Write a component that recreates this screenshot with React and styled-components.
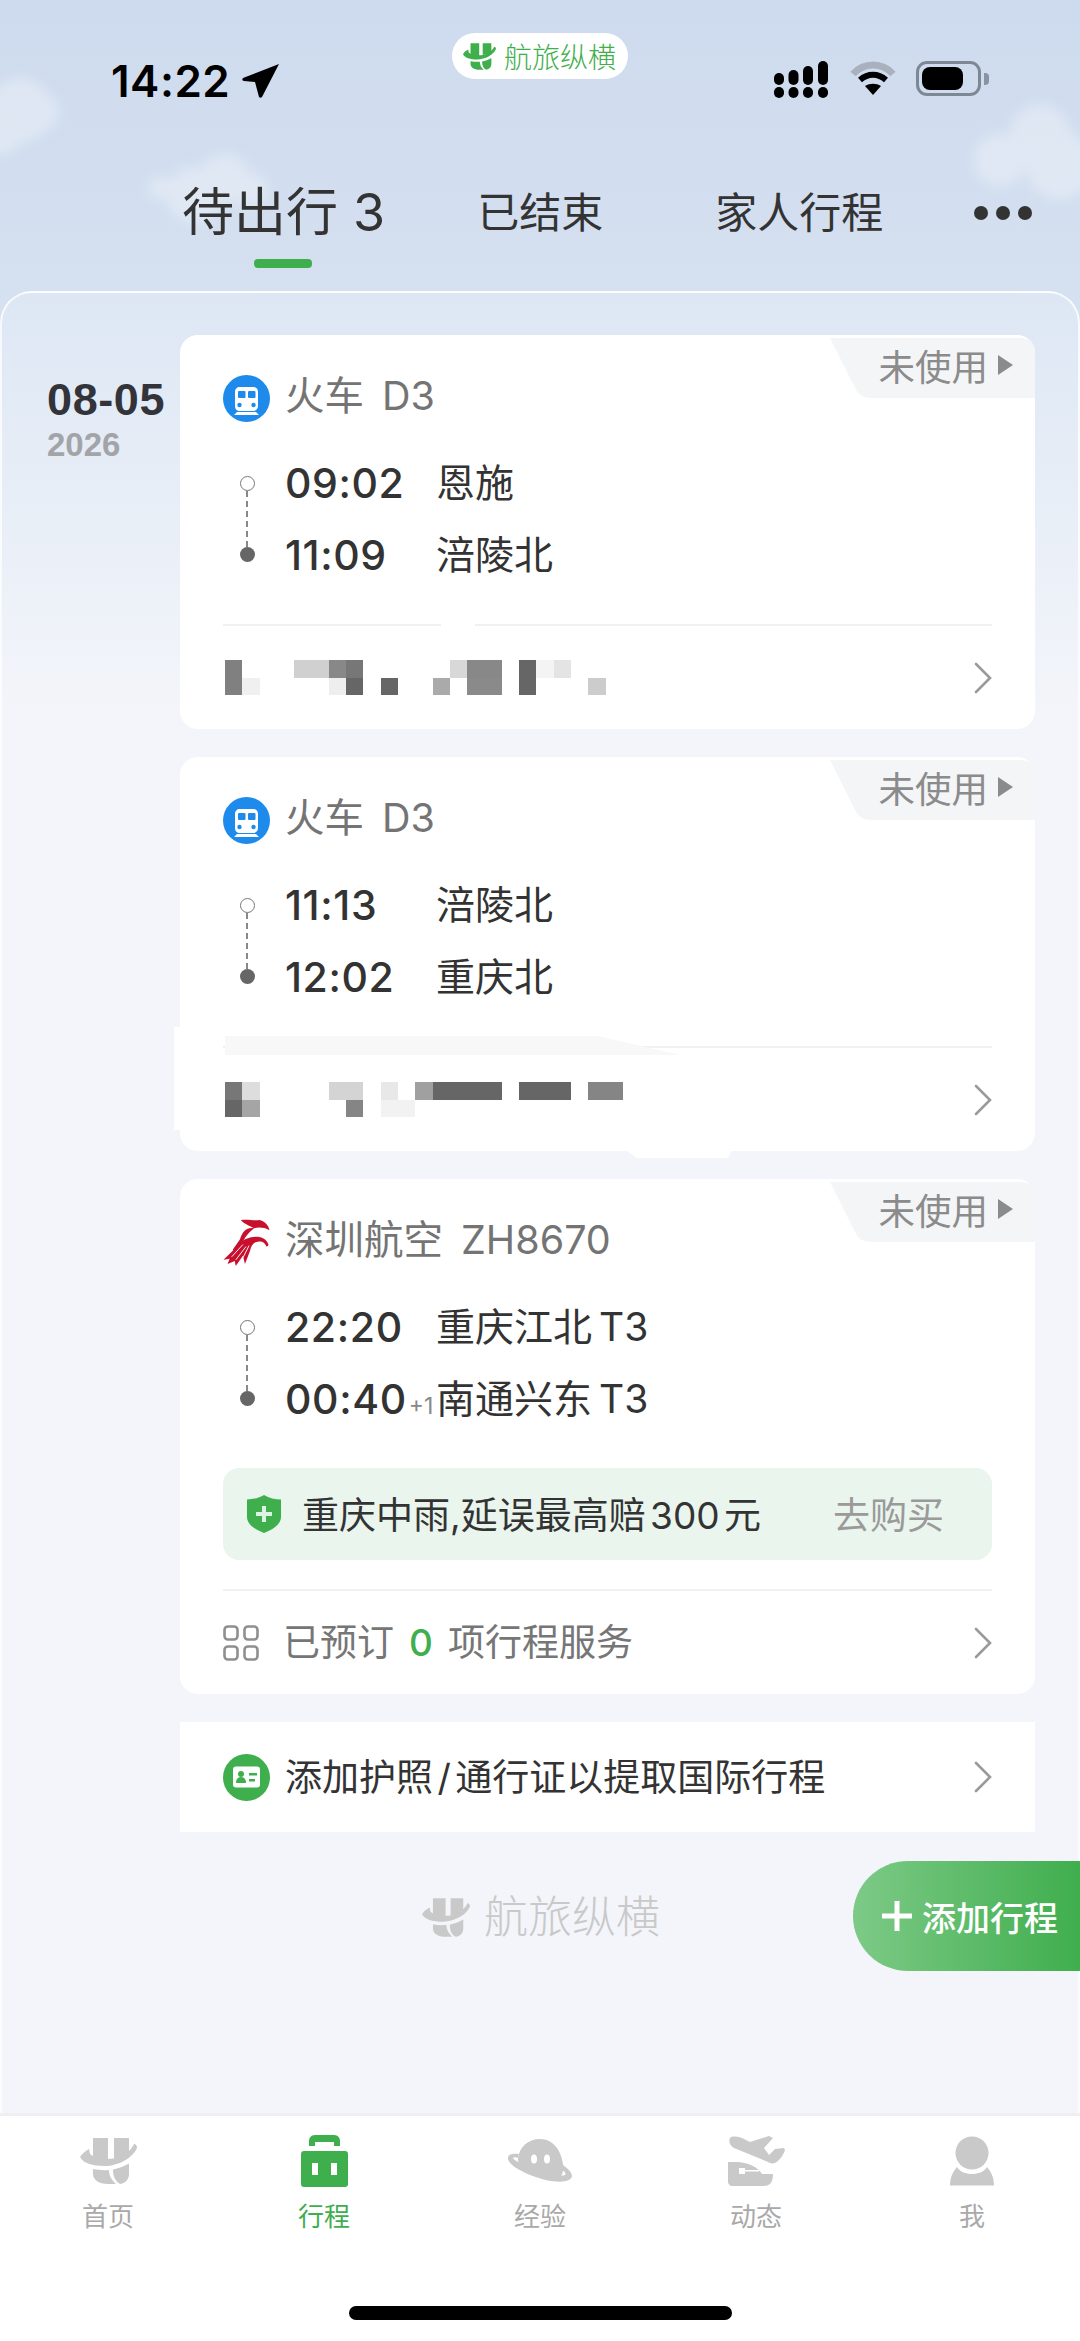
import React from 'react';
import styled, { createGlobalStyle } from 'styled-components';

const GREEN = '#3fae4d';
const SANS = 'Inter, "Noto Sans CJK SC", sans-serif';

const GlobalStyle = createGlobalStyle`
    html, body {
        margin: 0;
        padding: 0;
        background: #f3f5fa;
    }
    * {
        box-sizing: border-box;
    }
`;

const Page = styled.div`
    position: relative;
    width: 1080px;
    height: 2341px;
    overflow: hidden;
    display: flex;
    flex-direction: column;
    font-family: ${SANS};
    background: linear-gradient(#cedbee, #d5e0f0 300px);
`;

const Clouds = styled.svg`
    position: absolute;
    left: 0;
    top: 0;
`;

const Header = styled.header`
    position: relative;
    height: 291px;
    flex: none;
`;

const StatusBar = styled.div`
    display: grid;
    grid-template-columns: 1fr auto 1fr;
    padding: 33px 90px 0;
`;

const Clock = styled.div`
    display: flex;
    align-items: center;
    gap: 12px;
    margin: 23px 0 0 21px;
    font-size: 44px;
    font-weight: 600;
    line-height: 50px;
    letter-spacing: 0.5px;
    color: #000;
`;

const Pill = styled.div`
    display: flex;
    align-items: center;
    gap: 8px;
    height: 46px;
    width: 176px;
    padding-left: 11px;
    border-radius: 23px;
    background: #fff;
    font-size: 28px;
    font-weight: 300;
    color: ${GREEN};
`;

const StatusIcons = styled.div`
    display: flex;
    justify-content: flex-end;
    align-items: flex-start;
    gap: 20px;
    margin: 28px 9px 0 0;
`;

const Battery = styled.div`
    position: relative;
    width: 65px;
    height: 35px;
    padding: 3px;
    border: 3px solid #7e8794;
    border-radius: 11px;
    &::before {
        content: '';
        display: block;
        width: 41px;
        height: 100%;
        border-radius: 8px;
        background: #000;
    }
    &::after {
        content: '';
        position: absolute;
        right: -11px;
        top: 9px;
        width: 5px;
        height: 12px;
        border-radius: 0 4px 4px 0;
        background: #8a93a1;
    }
`;

const Tabs = styled.nav`
    display: flex;
    align-items: center;
    height: 70px;
    margin-top: 72px;
    padding-left: 182px;
    color: #333;
`;

const Tab = styled.div`
    position: relative;
    margin-right: ${(p) => p.$gap}px;
    font-size: ${(p) => (p.$active ? 52 : 42)}px;
    font-weight: 400;
    line-height: 70px;
    white-space: nowrap;
    ${(p) =>
        p.$active &&
        `&::after {
            content: '';
            position: absolute;
            left: 72px;
            bottom: -20px;
            width: 58px;
            height: 9px;
            border-radius: 4px;
            background: ${GREEN};
        }`}
`;

const TabCount = styled.span`
    margin-left: 15px;
`;

const More = styled.div`
    display: flex;
    gap: 8px;
`;

const Dot = styled.span`
    width: 14px;
    height: 14px;
    border-radius: 50%;
    background: #333;
`;

const Panel = styled.main`
    position: relative;
    flex: 1;
    padding-top: 42px;
    border: 2px solid rgba(255, 255, 255, 0.75);
    border-bottom: 0;
    border-radius: 32px 32px 0 0;
    background: linear-gradient(#dde7f4, #f3f5fa 420px);
`;

const TripRow = styled.div`
    display: flex;
    padding: 0 43px 0 45px;
`;

const DateCol = styled.div`
    width: 133px;
    flex: none;
    padding-top: 40px;
    font-family: "Liberation Sans", sans-serif;
    font-weight: 700;
`;

const DateDay = styled.div`
    font-size: 45px;
    line-height: 50px;
    letter-spacing: 0.6px;
    color: #33343a;
`;

const DateYear = styled.div`
    font-size: 33px;
    line-height: 40px;
    color: #a2a4a8;
`;

const CardStack = styled.div`
    flex: 1;
    display: flex;
    flex-direction: column;
    gap: 28px;
`;

const Card = styled.section`
    position: relative;
    padding: 40px 43px 0;
    border-radius: 18px;
    background: #fff;
`;

const Smudge = styled.div`
    position: absolute;
    background: #fff;
`;

const LeftSmudge = styled(Smudge)`
    left: -6px;
    top: 270px;
    width: 8px;
    height: 103px;
`;

const BottomSmudge = styled(Smudge)`
    left: 446px;
    bottom: -7px;
    width: 106px;
    height: 8px;
    clip-path: polygon(0 0, 100% 0, 96% 100%, 10% 100%);
`;

const StatusTag = styled.div`
    position: absolute;
    top: 3px;
    right: 0;
    width: 205px;
    height: 60px;
    display: flex;
    align-items: center;
    justify-content: flex-end;
    gap: 10px;
    padding: 0 22px 6px 0;
    background: #f3f5f7;
    clip-path: path('M0 0 H190 Q205 0 205 15 V60 H42 Q29 60 25 50 Z');
    font-size: 36.500px;
    color: #8b8b8b;
`;

const TagArrow = styled.span`
    width: 0;
    height: 0;
    border-left: 15px solid #8b8b8b;
    border-top: 10px solid transparent;
    border-bottom: 10px solid transparent;
`;

const TitleRow = styled.div`
    display: flex;
    align-items: center;
    height: 47px;
    gap: 15px;
    font-size: 39.500px;
    line-height: 47px;
    color: #747474;
`;

const Carrier = styled.div`
    display: flex;
    align-items: baseline;
    gap: 18px;
    margin-top: -5px;
`;

const Route = styled.div`
    display: flex;
    margin-top: 25px;
`;

const Timeline = styled.div`
    width: 48px;
    margin-right: 15px;
    padding-top: 29px;
    display: flex;
    flex-direction: column;
    align-items: center;
`;

const StopOpen = styled.span`
    width: 15px;
    height: 15px;
    border: 1.5px solid #777;
    border-radius: 50%;
`;

const Dash = styled.span`
    height: 56px;
    border-left: 2px dashed #888;
`;

const StopFilled = styled.span`
    width: 15px;
    height: 15px;
    border-radius: 50%;
    background: #666;
`;

const TimeRow = styled.div`
    display: flex;
    align-items: center;
    height: 72px;
    color: #333;
`;

const Time = styled.div`
    width: 150px;
    margin-left: -1px;
    margin-right: 1px;
    font-size: 41px;
    font-weight: 500;
    letter-spacing: 0.6px;
    white-space: nowrap;
`;

const NextDay = styled.span`
    margin-left: 2px;
    font-size: 23px;
    font-weight: 400;
    letter-spacing: 0;
    color: #888;
`;

const City = styled.div`
    padding-bottom: 6px;
    font-size: 39px;
    word-spacing: -4px;
`;

const Insurance = styled.div`
    display: flex;
    align-items: center;
    height: 92px;
    margin-top: 33px;
    padding: 0 48px 0 24px;
    border-radius: 16px;
    background: #eaf5ee;
    font-size: 37px;
    color: #333;
`;

const InsuranceText = styled.span`
    flex: 1;
    margin-left: 21px;
    padding-bottom: 3px;
    white-space: nowrap;
    word-spacing: -6px;
`;

const Buy = styled.span`
    padding-bottom: 3px;
    font-size: 37px;
    color: #9a9a9a;
`;

const Divider = styled.div`
    position: relative;
    height: 2px;
    margin-top: ${(p) => p.$top}px;
    background: #f1f1f1;
`;

const DividerGap = styled.span`
    position: absolute;
    left: 218px;
    top: 0;
    width: 34px;
    height: 2px;
    background: #fff;
`;

const DividerBand = styled.span`
    position: absolute;
    left: 2px;
    top: -10px;
    width: 455px;
    height: 19px;
    background: #f8f8f8;
    clip-path: polygon(0 0, 82% 0, 100% 100%, 0 100%);
`;

const FootRow = styled.div`
    display: flex;
    align-items: center;
    justify-content: space-between;
    height: ${(p) => p.$height || 103}px;
    font-size: 37px;
    color: ${(p) => p.$color || '#767676'};
`;

const FootLabel = styled.div`
    display: flex;
    align-items: center;
    gap: ${(p) => p.$gap || 0}px;
`;

const FootText = styled.span`
    padding-bottom: 5px;
    word-spacing: ${(p) => p.$spacing || 0}px;
`;

const Count = styled.span`
    margin: 0 15px;
    font-weight: 500;
    color: ${GREEN};
`;

const Mosaic = styled.div`
    display: grid;
    grid-template-columns: repeat(23, 17.3px);
    grid-auto-rows: 17.5px;
    margin-left: 2px;
`;

const Cell = styled.span`
    background: ${(p) => p.$shade || 'transparent'};
`;

const PassportCard = styled(Card)`
    padding-top: 0;
    border-radius: 0;
`;

const FooterLogo = styled.div`
    display: flex;
    justify-content: center;
    align-items: center;
    gap: 14px;
    margin-top: 55px;
    margin-left: 2px;
    font-size: 44px;
    font-weight: 300;
    line-height: 60px;
    color: #c9c9c9;
`;

const AddButton = styled.div`
    position: absolute;
    right: -2px;
    bottom: 142px;
    width: 227px;
    height: 110px;
    display: flex;
    align-items: center;
    gap: 10px;
    padding-left: 29px;
    border-radius: 55px 0 0 55px;
    background: linear-gradient(90deg, #7dca87, #3fae4d);
    font-size: 34px;
    font-weight: 500;
    color: #fff;
    white-space: nowrap;
`;

const BottomNav = styled.footer`
    flex: none;
    height: 228px;
    display: flex;
    flex-direction: column;
    border-top: 3px solid #eeeff1;
    background: #fff;
`;

const NavGrid = styled.div`
    display: grid;
    grid-template-columns: repeat(5, 1fr);
    padding-top: 17px;
`;

const NavItem = styled.div`
    display: flex;
    flex-direction: column;
    align-items: center;
    font-size: 26px;
    color: ${(p) => (p.$active ? GREEN : '#a9a9a9')};
`;

const NavIconBox = styled.div`
    height: 56px;
    display: flex;
    align-items: center;
`;

const NavLabel = styled.div`
    margin-top: 8px;
    line-height: 40px;
`;

const HomeBar = styled.div`
    width: 383px;
    height: 14px;
    margin: 69px auto 0;
    border-radius: 7px;
    background: #000;
`;

const LogoMark = ({ width, height, color }) => (
    <svg width={width} height={height} viewBox="0 0 57 46" fill={color}>
        <path d="M13 0h15v22H13zM34 0h15v20H34z" />
        <path d="M0 19C2 16 5 13 9 11l1 5c3 3 9 5 17 5 12 0 23-6 27-15 2 0 3 2 3 4C53 20 38 28 25 28 12 28 3 25 0 19z" />
        <path d="M13 31c5 1 11 1.500 16 1 0 5 2 9.500 7 14h-8c-9 0-15-4-15-10zM33 31.500c5-1 11-3 16-6V36c0 5-3 9-9 10-5-3-7-8-7-14.500z" />
    </svg>
);

const TrainIcon = () => (
    <svg width="47" height="47" viewBox="0 0 47 47">
        <circle cx="23.500" cy="23.500" r="23.500" fill="#1e8bec" />
        <path d="M12 17c0-3 2-5 5-5h13c3 0 5 2 5 5v14c0 3-2 5-5 5H17c-3 0-5-2-5-5zM14 37h19l3 3H11z" fill="#fff" />
        <rect x="15" y="16" width="7.500" height="7" rx="1" fill="#1e8bec" />
        <rect x="25" y="16" width="7.500" height="7" rx="1" fill="#1e8bec" />
        <circle cx="16.500" cy="30" r="2.200" fill="#1e8bec" />
        <circle cx="30.500" cy="30" r="2.200" fill="#1e8bec" />
    </svg>
);

const AirlineLogo = () => (
    <svg width="47" height="47" viewBox="0 0 45 46">
        <path
            d="M17 1c7-1 13 1 18 0 5 1 9 5 10 10-5-3-11-3-15-2-4-2-10-4-13-8z"
            fill="#c8102e"
        />
        <path
            d="M30 9c-8-1-11 3-14 11L9 30l3 1 7-9c3-6 7-10 11-13z"
            fill="#c8102e"
        />
        <path
            d="M44 25c-2-7-10-9-18-7-8 2-12 7-16 12L0 40l6-1-2 5 7-3 1 5 7-10 2 8 5-13c1-5 4-9 9-9 4 0 6 2 7 5 1 0 2-1 2-2z"
            fill="#c8102e"
        />
        <path d="M8 37l11-12M12 40l10-13M19 38l6-12" stroke="#fff" strokeWidth="0.900" fill="none" />
    </svg>
);

const Shield = () => (
    <svg width="34" height="38" viewBox="0 0 34 38" style={{ flex: 'none' }}>
        <path d="M17 0c5 3 11 4.500 17 4.500V22c0 7-7 12-17 16C7 34 0 29 0 22V4.500C6 4.500 12 3 17 0z" fill="#3fae4d" />
        <path d="M15 11h4v6h6v4h-6v6h-4v-6H9v-4h6z" fill="#dff3e2" />
    </svg>
);

const ServiceGrid = () => (
    <svg width="36" height="36" viewBox="0 0 36 36" fill="none" stroke="#8f8f8f" strokeWidth="2.600">
        <rect x="1.500" y="1.500" width="13" height="13" rx="3.500" />
        <rect x="21.500" y="1.500" width="13" height="13" rx="3.500" />
        <rect x="1.500" y="21.500" width="13" height="13" rx="3.500" />
        <rect x="21.500" y="21.500" width="13" height="13" rx="3.500" />
    </svg>
);

const PassportIcon = () => (
    <svg width="47" height="47" viewBox="0 0 47 47">
        <circle cx="23.500" cy="23.500" r="23.500" fill="#3fae4d" />
        <rect x="10" y="12.500" width="27" height="21" rx="3" fill="#fff" />
        <circle cx="18" cy="20" r="3" fill="#3fae4d" />
        <path d="M13 29c0-4 2-6 5-6s5 2 5 6z" fill="#3fae4d" />
        <rect x="26" y="19" width="8" height="2.500" fill="#3fae4d" />
        <rect x="26" y="25" width="6" height="2.500" fill="#3fae4d" />
    </svg>
);

const Chevron = () => (
    <svg width="18" height="32" viewBox="0 0 18 32" fill="none" stroke="#9a9a9a" strokeWidth="2.600" strokeLinecap="round">
        <path d="M2 2l14 14L2 30" />
    </svg>
);

const BagIcon = () => (
    <svg width="47" height="52" viewBox="0 0 47 52">
        <path d="M8 11V6c0-3 2-6 6-6h19c4 0 6 3 6 6v5h-6V7H14v4z" fill="#3fae4d" />
        <rect y="16" width="47" height="36" rx="3" fill="#3fae4d" />
        <rect x="11" y="28" width="6" height="12" fill="#fff" />
        <rect x="30" y="28" width="6" height="12" fill="#fff" />
    </svg>
);

const PlanetIcon = () => (
    <svg width="66" height="44" viewBox="0 0 66 44">
        <path d="M12 15C6 14 0 15 1 20c1 6 14 14 34 20 14 4 29 4 30-3 0-4-5-8-9-11l-2 4c3 2 6 5 4 6-3 1-10 1-22-3C18 27 5 20 6 19c1-1 3-1 5 0z" fill="#c9c9c9" />
        <path d="M11 20C12 8 21 0 33 0c13 0 21 11 23 25 1 5 0 9-2 12-10 2-28-2-36-8-5-3-7-5-7-9z" fill="#c9c9c9" />
        <ellipse cx="27" cy="20" rx="3" ry="4.500" fill="#fff" />
        <ellipse cx="40" cy="20" rx="3" ry="4.500" fill="#fff" />
    </svg>
);

const PlaneTrainIcon = () => (
    <svg width="57" height="50" viewBox="0 0 57 50">
        <path d="M3 1c5-1 9 0 13 2l6 3 19-6 4 2-9 10 5 7 6-6 9-1 1 2c-2 6-6 11-10 13-3 1-5 0-7-1L6 12C1 9 0 4 3 1z" fill="#c9c9c9" />
        <path d="M0 26h8c12 0 22 5 26 12h11c0 8-3 12-9 12H4c-2 0-4-2-4-4z" fill="#c9c9c9" />
        <rect x="11" y="32" width="6" height="6" fill="#fff" />
        <rect x="17" y="34" width="14" height="1.500" fill="#fff" />
    </svg>
);

const UserIcon = () => (
    <svg width="44" height="50" viewBox="0 0 44 50" fill="#c9c9c9">
        <circle cx="22" cy="17" r="16.500" />
        <path d="M0 49.500C0 41 3 36 7 31c3 5 9 7 15 7s12-2 15-7c4 5 7 10 7 18.500z" />
    </svg>
);

const trainOneMosaic = [
    ['#808080', '', '', '', '#d0d0d0', '#d0d0d0', '#888', '#777', '', '', '', '', '', '#d8d8d8', '#888', '#888', '', '#666', '#f4f4f4', '#e4e4e4', '', '', ''],
    ['#808080', '#f0f0f0', '', '', '', '', '#eee', '#666', '', '#666', '', '', '#aaa', '', '#8a8a8a', '#8a8a8a', '', '#666', '', '', '', '#ccc', ''],
];

const trainTwoMosaic = [
    ['#777', '#ddd', '', '', '', '', '#d4d4d4', '#d4d4d4', '', '#e8e8e8', '', '#a0a0a0', '#666', '#666', '#666', '#666', '', '#666', '#666', '#666', '', '#858585', '#858585'],
    ['#666', '#a5a5a5', '', '', '', '', '', '#858585', '', '#f2f2f2', '#f2f2f2', '', '', '', '', '', '', '', '', '', '', '', ''],
];

const Blur = ({ rows }) => (
    <Mosaic>
        {rows.flat().map((shade, i) => (
            <Cell key={i} $shade={shade} />
        ))}
    </Mosaic>
);

const Leg = ({ icon, carrier, code, from, to, fromTime, toTime, plusOne }) => (
    <>
        <StatusTag>
            未使用
            <TagArrow />
        </StatusTag>
        <TitleRow>
            {icon}
            <Carrier>
                <span>{carrier}</span>
                <span>{code}</span>
            </Carrier>
        </TitleRow>
        <Route>
            <Timeline>
                <StopOpen />
                <Dash />
                <StopFilled />
            </Timeline>
            <div>
                <TimeRow>
                    <Time>{fromTime}</Time>
                    <City>{from}</City>
                </TimeRow>
                <TimeRow>
                    <Time>
                        {toTime}
                        {plusOne && <NextDay>+1</NextDay>}
                    </Time>
                    <City>{to}</City>
                </TimeRow>
            </div>
        </Route>
    </>
);

const navItems = [
    { label: '首页', icon: <LogoMark width={57} height={46} color="#c9c9c9" /> },
    { label: '行程', icon: <BagIcon />, active: true },
    { label: '经验', icon: <PlanetIcon /> },
    { label: '动态', icon: <PlaneTrainIcon /> },
    { label: '我', icon: <UserIcon /> },
];

const App = () => {
    return (
        <Page>
            <GlobalStyle />
            <Clouds width="1080" height="291" viewBox="0 0 1080 291">
                <defs>
                    <filter id="cloudBlur">
                        <feGaussianBlur stdDeviation="6" />
                    </filter>
                </defs>
                <g fill="#fff" opacity="0.3" filter="url(#cloudBlur)">
                    <circle cx="20" cy="110" r="32" />
                    <circle cx="38" cy="112" r="20" />
                    <circle cx="0" cy="130" r="24" />
                    <circle cx="225" cy="178" r="24" />
                    <circle cx="195" cy="195" r="28" />
                    <circle cx="160" cy="188" r="11" />
                    <circle cx="250" cy="190" r="17" />
                    <circle cx="1040" cy="135" r="30" />
                    <circle cx="1000" cy="160" r="26" />
                    <circle cx="1060" cy="165" r="34" />
                </g>
            </Clouds>
            <Header>
                <StatusBar>
                    <Clock>
                        14:22
                        <svg width="38" height="34" viewBox="0 0 38 34">
                            <path d="M37 0L1 14c-1 1-1 3 1 3l11 1 4 15c1 1 2 1 3 0z" fill="#000" />
                        </svg>
                    </Clock>
                    <Pill>
                        <LogoMark width={33} height={27} color={GREEN} />
                        航旅纵横
                    </Pill>
                    <StatusIcons>
                        <svg width="56" height="38" viewBox="0 0 56 38" fill="#000">
                            <rect x="0" y="26" width="10" height="11" rx="5" />
                            <rect x="14.500" y="26" width="10" height="11" rx="5" />
                            <rect x="29" y="26" width="10" height="11" rx="5" />
                            <rect x="44" y="26" width="10" height="11" rx="5" />
                            <rect x="0" y="12" width="10" height="12" rx="5" />
                            <rect x="14.500" y="9" width="10" height="15" rx="5" />
                            <rect x="29" y="5" width="10" height="19" rx="5" />
                            <rect x="44" y="0" width="10" height="24" rx="5" />
                        </svg>
                        <svg width="46" height="34" viewBox="0 0 46 34" fill="none">
                            <path d="M3 13C14 1 32 1 43 13" stroke="#a9b1bf" strokeWidth="7" />
                            <path d="M10 19c8-7 18-7 26 0" stroke="#000" strokeWidth="6" />
                            <path d="M15 25c5-3 11-3 16 0l-8 9z" fill="#000" />
                        </svg>
                        <Battery />
                    </StatusIcons>
                </StatusBar>
                <Tabs>
                    <Tab $active $gap={92}>
                        待出行<TabCount>3</TabCount>
                    </Tab>
                    <Tab $gap={112}>已结束</Tab>
                    <Tab $gap={91}>家人行程</Tab>
                    <More>
                        <Dot />
                        <Dot />
                        <Dot />
                    </More>
                </Tabs>
            </Header>
            <Panel>
                <TripRow>
                    <DateCol>
                        <DateDay>08-05</DateDay>
                        <DateYear>2026</DateYear>
                    </DateCol>
                    <CardStack>
                        <Card>
                            <Leg icon={<TrainIcon />} carrier="火车" code="D3" fromTime="09:02" from="恩施" toTime="11:09" to="涪陵北" />
                            <Divider $top={33}>
                                <DividerGap />
                            </Divider>
                            <FootRow>
                                <Blur rows={trainOneMosaic} />
                                <Chevron />
                            </FootRow>
                        </Card>
                        <Card>
                            <LeftSmudge />
                            <BottomSmudge />
                            <Leg icon={<TrainIcon />} carrier="火车" code="D3" fromTime="11:13" from="涪陵北" toTime="12:02" to="重庆北" />
                            <Divider $top={33}>
                                <DividerBand />
                            </Divider>
                            <FootRow>
                                <Blur rows={trainTwoMosaic} />
                                <Chevron />
                            </FootRow>
                        </Card>
                        <Card>
                            <Leg icon={<AirlineLogo />} carrier="深圳航空" code="ZH8670" fromTime="22:20" from="重庆江北 T3" toTime="00:40" plusOne to="南通兴东 T3" />
                            <Insurance>
                                <Shield />
                                <InsuranceText>重庆中雨,延误最高赔 300 元</InsuranceText>
                                <Buy>去购买</Buy>
                            </Insurance>
                            <Divider $top={29} />
                            <FootRow>
                                <FootLabel $gap={24}>
                                    <ServiceGrid />
                                    <FootText>
                                        已预订<Count>0</Count>项行程服务
                                    </FootText>
                                </FootLabel>
                                <Chevron />
                            </FootRow>
                        </Card>
                        <PassportCard>
                            <FootRow $height={110} $color="#333">
                                <FootLabel $gap={15}>
                                    <PassportIcon />
                                    <FootText $spacing={-6}>添加护照 / 通行证以提取国际行程</FootText>
                                </FootLabel>
                                <Chevron />
                            </FootRow>
                        </PassportCard>
                    </CardStack>
                </TripRow>
                <FooterLogo>
                    <LogoMark width={48} height={41} color="#c9c9c9" />
                    航旅纵横
                </FooterLogo>
                <AddButton>
                    <svg width="30" height="30" viewBox="0 0 30 30" fill="#fff">
                        <path d="M12.500 0h5v12.500H30v5H17.500V30h-5V17.500H0v-5h12.500z" />
                    </svg>
                    添加行程
                </AddButton>
            </Panel>
            <BottomNav>
                <NavGrid>
                    {navItems.map((item) => (
                        <NavItem key={item.label} $active={item.active}>
                            <NavIconBox>{item.icon}</NavIconBox>
                            <NavLabel>{item.label}</NavLabel>
                        </NavItem>
                    ))}
                </NavGrid>
                <HomeBar />
            </BottomNav>
        </Page>
    );
};

export default App;
